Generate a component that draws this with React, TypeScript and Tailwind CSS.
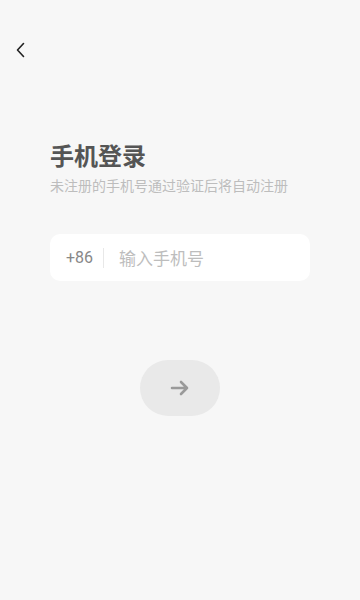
import React from "react";

export default function App() {
  return (
    <div
      className="w-[360px] h-[600px] bg-[#f7f7f7] flex flex-col"
      style={{ fontFamily: '"Noto Sans CJK SC", "Noto Sans", sans-serif' }}
    >
      <div className="h-[100px] pl-[14px] pt-[41px]">
        <svg width="14" height="18" viewBox="0 0 14 18" fill="none">
          <path d="M9.5 2.5 L3.5 9 L9.5 15.5" stroke="#222" strokeWidth="1.6" strokeLinecap="round" strokeLinejoin="round" />
        </svg>
      </div>
      <div className="px-[50px] pt-[39px]">
        <div className="text-[24px] leading-[32px] font-bold text-[#555]">手机登录</div>
        <div className="mt-[3px] text-[14px] leading-[22px] text-[#bdbdbd]">未注册的手机号通过验证后将自动注册</div>
        <div className="mt-[38px] h-[47px] bg-white rounded-[10px] flex items-center pl-[16px]">
          <span className="text-[16px] text-[#888]" style={{ fontFamily: '"Roboto", "Noto Sans", sans-serif' }}>+86</span>
          <div className="w-px h-[20px] bg-[#e8e8e8] ml-[10px] mr-[15px]" />
          <span className="text-[17px] text-[#bdbdbd]">输入手机号</span>
        </div>
      </div>
      <div className="flex justify-center mt-[79px]">
        <div className="w-[80px] h-[56px] rounded-full bg-[#e9e9e9] flex items-center justify-center">
          <svg width="22" height="22" viewBox="0 0 22 22" fill="none">
            <path d="M3 11 H18 M12 5 L18 11 L12 17" stroke="#9a9a9a" strokeWidth="2.6" strokeLinecap="round" strokeLinejoin="round" />
          </svg>
        </div>
      </div>
    </div>
  );
}
